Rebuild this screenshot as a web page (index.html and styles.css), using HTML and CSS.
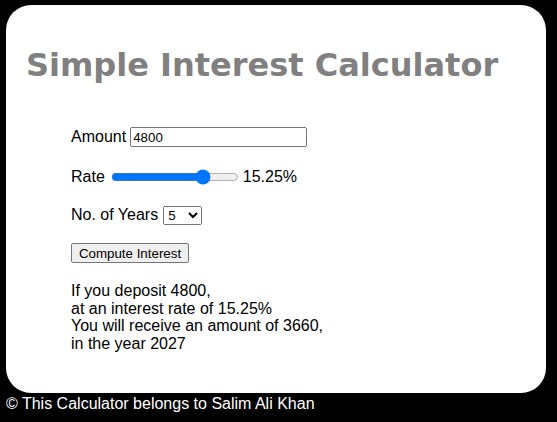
FILE: index.html
```html
<!DOCTYPE html>
<html>
<head>
<meta charset="utf-8">
<link rel="stylesheet" href="styles.css">
</head>
<body>
<main class="card">
  <h1 class="title">Simple Interest Calculator</h1>
  <form class="form">
    <div class="row row-amount">
      <label for="amount">Amount</label>
      <input id="amount" class="amount" type="number" value="4800">
    </div>
    <div class="row row-rate">
      <label for="rate">Rate</label>
      <input id="rate" class="rate" type="range" min="1" max="20" step="0.25" value="15.25">
      <span class="rate-val">15.25%</span>
    </div>
    <div class="row row-years">
      <label for="years">No. of Years</label>
      <select id="years" class="years">
        <option>1</option><option>2</option><option>3</option><option>4</option>
        <option selected>5</option><option>6</option><option>7</option><option>8</option>
        <option>9</option><option>10</option>
      </select>
    </div>
    <div class="row row-btn">
      <button type="button" class="btn">Compute Interest</button>
    </div>
    <div class="result">
      If you deposit 4800,<br>
      at an interest rate of 15.25%<br>
      You will receive an amount of 3660,<br>
      in the year 2027
    </div>
  </form>
</main>
<footer class="footer">© This Calculator belongs to Salim Ali Khan</footer>
</body>
</html>
```

FILE: styles.css
```css
html, body {
  margin: 0;
  background: #000;
}
body {
  padding: 5px 11px 0 6px;
  font-family: "Liberation Sans", Arial, sans-serif;
  font-size: 16px;
  color: #000;
}
.card {
  background: #fff;
  border-radius: 25px;
  height: 388px;
  box-sizing: border-box;
  padding: 41px 20px 0 20px;
}
.title {
  margin: 0;
  font-family: Verdana, "DejaVu Sans", sans-serif;
  font-size: 32px;
  font-weight: bold;
  color: #808080;
  line-height: 38px;
}
.form {
  margin: 42px 0 0 45px;
}
.row {
  display: flex;
  align-items: center;
  height: 22px;
}
.row-amount { margin-bottom: 18px; }
.row-rate { margin-bottom: 16px; }
.row-years { margin-bottom: 16px; }
.row-btn { margin-bottom: 18px; }
.amount {
  margin: 0 0 0 4px;
  width: 177px;
  height: 20px;
  box-sizing: border-box;
  font-family: Arial, "Liberation Sans", sans-serif;
  font-size: 13.33px;
  padding: 1px 2px;
  border: 1px solid #767676;
  border-radius: 2px;
}
.rate {
  margin: 0 0 0 6px;
  width: 128px;
}
.rate-val {
  margin-left: 4px;
}
.years {
  margin-left: 5px;
  width: 39px;
  height: 19px;
  font-size: 13.33px;
}
.btn {
  box-sizing: border-box;
  width: 118px;
  height: 20px;
  white-space: nowrap;
  font-family: Arial, "Liberation Sans", sans-serif;
  font-size: 13.33px;
  padding: 1px 0;
  color: #000;
  background: #efefef;
  border: 1px solid #767676;
  border-radius: 2px;
}
.result {
  line-height: 17.7px;
}
.footer {
  color: #fff;
  padding-top: 2px;
  line-height: 18px;
}
```
